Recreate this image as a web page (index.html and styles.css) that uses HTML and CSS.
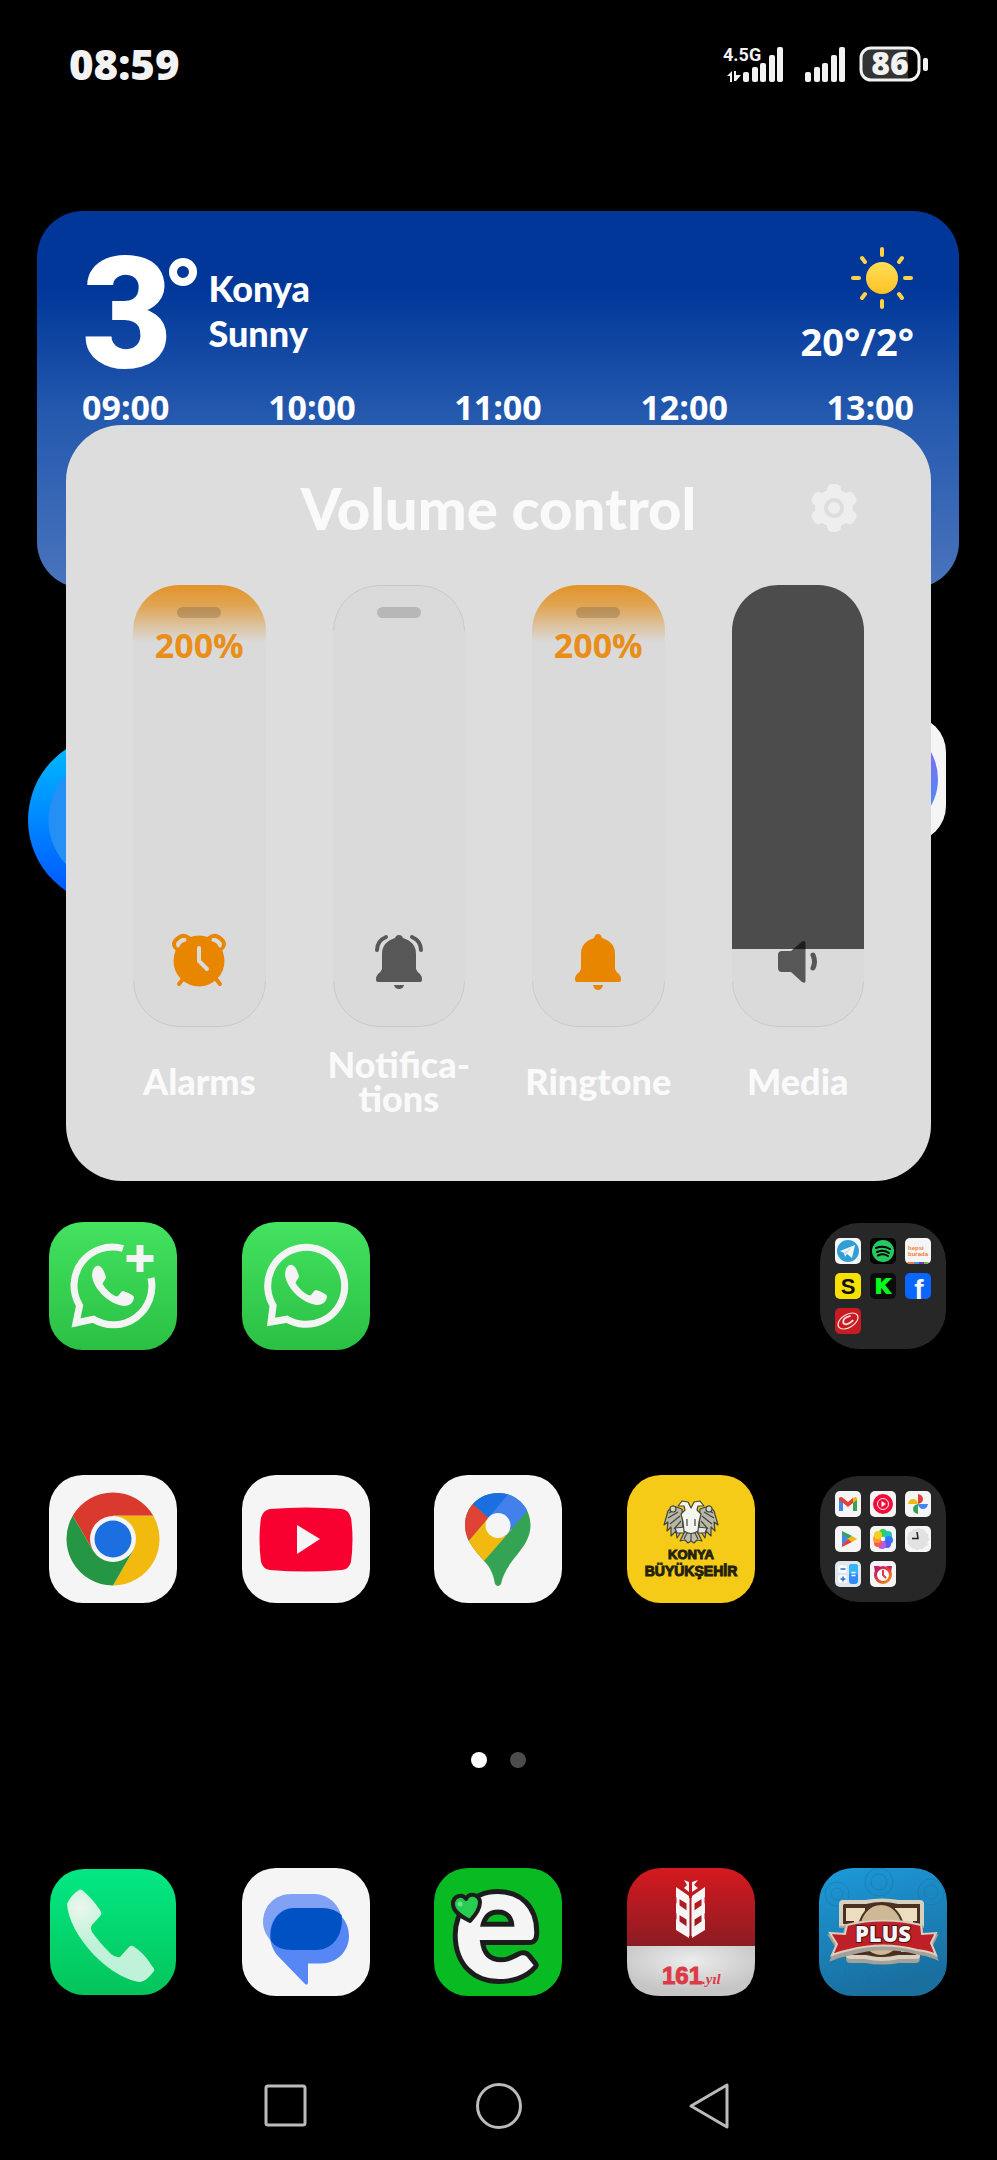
FILE: index.html
```html
<!DOCTYPE html>
<html lang="en">
<head>
    <meta charset="UTF-8">
    <meta name="viewport" content="width=device-width, initial-scale=1.0">
    <title>Volume control</title>
    <link rel="stylesheet" href="styles.css">
</head>
<body>
    <header class="status-bar">
        <time class="clock">08:59</time>
        <div class="status-icons">
            <svg width="62" height="36" viewBox="0 0 62 36" fill="#f2f2f2">
                <text x="0" y="15" class="network">4.5G</text>
                <path d="M4 30L9 25V36H7V30ZM11 25H13V29H18L13 35H11Z"/>
                <rect x="20" y="26" width="6" height="10" rx="2"/>
                <rect x="29" y="21" width="6" height="15" rx="2"/>
                <rect x="37" y="17" width="6" height="19" rx="2"/>
                <rect x="46" y="9" width="6" height="27" rx="2"/>
                <rect x="54" y="1" width="6" height="35" rx="2"/>
            </svg>
            <svg width="40" height="36" viewBox="0 0 40 36" fill="#f2f2f2">
                <rect x="0" y="26" width="6" height="10" rx="2"/>
                <rect x="9" y="21" width="6" height="15" rx="2"/>
                <rect x="17" y="17" width="6" height="19" rx="2"/>
                <rect x="26" y="9" width="6" height="27" rx="2"/>
                <rect x="34" y="1" width="6" height="35" rx="2"/>
            </svg>
            <svg class="battery" width="69" height="36" viewBox="0 0 69 36">
                <path d="M12 2H49V34H12Q2 34 2 24V12Q2 2 12 2Z" fill="#333"/>
                <rect x="2" y="2" width="58" height="32" rx="10" fill="none" stroke="#f2f2f2" stroke-width="3"/>
                <rect x="64" y="12" width="5" height="13" rx="2" fill="#f2f2f2"/>
                <text x="31" y="29" text-anchor="middle" class="charge">86</text>
            </svg>
        </div>
    </header>

    <section class="weather">
        <div class="summary">
            <div class="degrees">3<svg width="30" height="30" viewBox="0 0 30 30"><circle cx="15" cy="15" r="10" fill="none" stroke="#fff" stroke-width="8"/></svg></div>
            <div class="place">Konya<br>Sunny</div>
            <div class="forecast">
                <svg width="62" height="62" viewBox="0 0 62 62">
                    <defs>
                        <linearGradient id="sun" x1="0" y1="0" x2="0" y2="1">
                            <stop offset="0" stop-color="#ffdf58"/>
                            <stop offset="1" stop-color="#ffc124"/>
                        </linearGradient>
                    </defs>
                    <circle cx="30" cy="31" r="16" fill="url(#sun)"/>
                    <path d="M30 2V8M30 54V60M1 31H7M53 31H59M10 11L13 15M50 11L47 15M10 51L13 47M50 51L47 47" stroke="#ffd247" stroke-width="4" stroke-linecap="round"/>
                </svg>
                <span class="range">20°/2°</span>
            </div>
        </div>
        <div class="hours">
            <span>09:00</span>
            <span>10:00</span>
            <span>11:00</span>
            <span>12:00</span>
            <span>13:00</span>
        </div>
    </section>

    <main class="home">
        <div class="widgets">
            <div class="orb"></div>
            <svg class="app" viewBox="0 0 128 128">
                <defs>
                    <linearGradient id="ring" x1="0" y1="0" x2="0" y2="1">
                        <stop offset="0.2" stop-color="#7e6cf0"/>
                        <stop offset="0.8" stop-color="#4d8df8"/>
                    </linearGradient>
                </defs>
                <rect x="1" y="1" width="126" height="126" rx="36" fill="#f5f5f5"/>
                <circle cx="64" cy="64" r="55" fill="url(#ring)"/>
            </svg>
        </div>

        <div class="apps">
            <svg class="app" viewBox="0 0 128 128">
                <defs>
                    <linearGradient id="green" x1="0" y1="0" x2="0" y2="1">
                        <stop offset="0" stop-color="#43e25f"/>
                        <stop offset="1" stop-color="#2bc044"/>
                    </linearGradient>
                </defs>
                <rect width="128" height="128" rx="34" fill="url(#green)"/>
                <path d="M102 56A38.5 38.5 0 0 1 44.5 97.2L27 101L30.6 83.5A38.5 38.5 0 0 1 74 26.5" fill="none" stroke="#f4f4f4" stroke-width="7"/>
                <path d="M91 23V50M77.5 36.5H104.5" stroke="#f4f4f4" stroke-width="7"/>
                <path d="M50 44C46 43 43 48 43 54C45 68 60 82 75 84C81 84 85 80 85 75C85 73 75 69 74 69C72 69 70 74 68 74.5C62 73 56 66 53.5 62C54 60 57 57 57 55C56 52 54 45 50 44Z" fill="#f4f4f4"/>
            </svg>
            <svg class="app" viewBox="0 0 128 128">
                <rect width="128" height="128" rx="34" fill="url(#green)"/>
                <path d="M31.1 83.5A38.5 38.5 0 1 1 45 97.2L29 100Z" fill="none" stroke="#f4f4f4" stroke-width="7"/>
                <path d="M50 43C46 42 43 47 43 53C45 67 60 81 75 83C81 83 85 79 85 74C85 72 75 68 74 68C72 68 70 73 68 73.5C62 72 56 65 53.5 61C54 59 57 56 57 54C56 51 54 44 50 43Z" fill="#f4f4f4"/>
            </svg>
            <div class="folder folder-top">
                <svg class="mini" viewBox="0 0 26 26">
                    <rect width="26" height="26" rx="5" fill="#f5f5f5"/>
                    <circle cx="13" cy="13" r="11" fill="#2f9fd8"/>
                    <path d="M5 13L20 7L17 20L12 16L10 19L9 15Z" fill="#f5f5f5"/>
                    <path d="M9 15L17 9L11 16" fill="#b9dbee"/>
                </svg>
                <svg class="mini" viewBox="0 0 26 26">
                    <rect width="26" height="26" rx="5" fill="#000"/>
                    <circle cx="13" cy="13" r="11" fill="#26c95f"/>
                    <path d="M6 10Q13 7 20 11M7 14Q13 11 19 15M8 17.5Q13 15 18 18" fill="none" stroke="#000" stroke-width="2" stroke-linecap="round"/>
                </svg>
                <svg class="mini" viewBox="0 0 26 26">
                    <rect width="26" height="26" rx="5" fill="#f5f5f5"/>
                    <text x="3" y="12" class="shop">hepsi</text>
                    <text x="3" y="18" class="shop">burada</text>
                    <path d="M2 24H9V26H4Z" fill="#f47b35"/>
                    <path d="M9 24H14V26H9Z" fill="#3f9bd8"/>
                    <path d="M14 24H19V26H14Z" fill="#7c35c0"/>
                    <path d="M19 24H24L22 26H19Z" fill="#6fc040"/>
                </svg>
                <svg class="mini" viewBox="0 0 26 26">
                    <rect width="26" height="26" rx="5" fill="#f7e000"/>
                    <text x="13" y="21" text-anchor="middle" class="letter">S</text>
                </svg>
                <svg class="mini" viewBox="0 0 26 26">
                    <rect width="26" height="26" rx="5" fill="#0c0c0c"/>
                    <text x="13" y="20" text-anchor="middle" class="letter letter-k">K</text>
                </svg>
                <svg class="mini" viewBox="0 0 26 26">
                    <rect width="26" height="26" rx="5" fill="#0a66ff"/>
                    <text x="14" y="26" text-anchor="middle" class="letter letter-f">f</text>
                </svg>
                <svg class="mini" viewBox="0 0 26 26">
                    <rect width="26" height="26" rx="5" fill="#c91c22"/>
                    <g fill="none" stroke="#f7dede" transform="rotate(-32 13 13)">
                        <ellipse cx="13" cy="13" rx="11" ry="6.5" stroke-width="1.2"/>
                        <path d="M18 10Q10 7 8 12Q8 17 18 15" stroke-width="1.8"/>
                    </g>
                </svg>
            </div>

            <svg class="app" viewBox="0 0 128 128">
                <rect width="128" height="128" rx="34" fill="#f5f5f5"/>
                <path d="M23.7 40.75A46.5 46.5 0 0 1 104.3 40.75H64L43.9 75.6Z" fill="#d93a2d"/>
                <path d="M104.3 40.75A46.5 46.5 0 0 1 64 110.5L84.1 75.6L64 40.75Z" fill="#f2b90f"/>
                <path d="M64 110.5A46.5 46.5 0 0 1 23.7 40.75L43.9 75.6H84.1Z" fill="#259644"/>
                <circle cx="64" cy="64" r="23" fill="#f5f5f5"/>
                <circle cx="64" cy="64" r="18.5" fill="#1b6fe0"/>
            </svg>
            <svg class="app" viewBox="0 0 128 128">
                <rect width="128" height="128" rx="34" fill="#f5f5f5"/>
                <path d="M28 34Q64 31 100 34Q107 35 109 43Q112 64 109 87Q107 94 100 95Q64 98 28 95Q21 94 19 87Q16 64 19 43Q21 35 28 34Z" fill="#f8002f"/>
                <path d="M55 50L78 64L55 79Z" fill="#f5f5f5"/>
            </svg>
            <svg class="app" viewBox="0 0 128 128">
                <defs>
                    <clipPath id="pin">
                        <path d="M64 18C82.5 18 96.5 32 96.5 50C96.5 74 72 84 67 109Q64 113 61 109C59 97 55 91 50 86C42 76 31 66 31 50C31 32 45.5 18 64 18Z"/>
                    </clipPath>
                </defs>
                <rect width="128" height="128" rx="34" fill="#f5f5f5"/>
                <g clip-path="url(#pin)">
                    <rect x="20" y="10" width="90" height="110" fill="#34a353"/>
                    <path d="M10 95L50 86L78 54L54 43Z" fill="#f2b90f"/>
                    <path d="M20 83L54.3 42.7L39 29L20 12Z" fill="#e04335"/>
                    <path d="M54.3 42.7L39 29L20 10H80L60 50Z" fill="#1b6fe0"/>
                    <path d="M54.3 42.7L82 10H110V17L71 61.5Z" fill="#4280ec"/>
                </g>
                <circle cx="64" cy="50.5" r="12.5" fill="#f5f5f5"/>
            </svg>
            <svg class="app" viewBox="0 0 128 128">
                <rect width="128" height="128" rx="34" fill="#f5cb18"/>
                <g stroke="#45453a" stroke-width="1.2" stroke-linejoin="round">
                    <path d="M55 34L46 31L41 36L37 50L41 47L40 56L44 52L44 61L49 56L50 63L56 54Z" fill="#b8b8a8"/>
                    <path d="M73 34L82 31L87 36L91 50L87 47L88 56L84 52L84 61L79 56L78 63L72 54Z" fill="#b8b8a8"/>
                    <path d="M60 52L68 52L75 66L70 65L67 68L64 66L61 68L58 65L53 66Z" fill="#bdbdb0"/>
                    <path d="M48 53L58 52L57 58H50ZM70 52L80 53L78 58H71Z" fill="#e5e5e0"/>
                    <path d="M64 33L61 27L55 26L51 31L57 31L58 35L54 39L56 47L57 56Q64 61 71 56L72 47L74 39L70 35L71 31L77 31L73 26L67 27Z" fill="#f5f5f0"/>
                    <path d="M42 38L49 34M41 43L51 37M43 49L53 41M47 54L54 46M86 38L79 34M87 43L77 37M85 49L75 41M81 54L74 46M64 58V66M60 58L57 64M68 58L71 64M60 44V51M68 44V51" fill="none"/>
                    <circle cx="46" cy="34" r="3" fill="#d5d5ca"/>
                    <circle cx="82" cy="34" r="3" fill="#d5d5ca"/>
                </g>
                <text x="64" y="84" text-anchor="middle" class="city">KONYA</text>
                <text x="64" y="101" text-anchor="middle" class="city city-large">BÜYÜKŞEHİR</text>
            </svg>
            <div class="folder">
                <svg class="mini" viewBox="0 0 26 26">
                    <rect width="26" height="26" rx="5" fill="#f5f5f5"/>
                    <path d="M4 8V20H8V10Z" fill="#4285f4"/>
                    <path d="M18 10V20H22V8Z" fill="#34a353"/>
                    <path d="M4 7Q6 5 8 7L13 11L18 7V12L13 16L8 12L4 9Z" fill="#e04335"/>
                    <path d="M18 7Q22 4 22 9L18 12Z" fill="#f2b90f"/>
                </svg>
                <svg class="mini" viewBox="0 0 26 26">
                    <rect width="26" height="26" rx="5" fill="#f5f5f5"/>
                    <circle cx="13" cy="13" r="10" fill="#f20d3a"/>
                    <circle cx="13" cy="13" r="5.5" fill="none" stroke="#f5f5f5"/>
                    <path d="M11.5 10L16 13L11.5 16Z" fill="#f5f5f5"/>
                </svg>
                <svg class="mini" viewBox="0 0 26 26">
                    <rect width="26" height="26" rx="5" fill="#f5f5f5"/>
                    <path d="M13 13V3Q18 4 18 8Q18 12 13 13Z" fill="#e04335"/>
                    <path d="M13 13H23Q22 18 18 18Q14 18 13 13Z" fill="#4285f4"/>
                    <path d="M13 13V23Q8 22 8 18Q8 14 13 13Z" fill="#34a353"/>
                    <path d="M13 13H3Q4 8 8 8Q12 8 13 13Z" fill="#f2b90f"/>
                </svg>
                <svg class="mini" viewBox="0 0 26 26">
                    <rect width="26" height="26" rx="5" fill="#f5f5f5"/>
                    <path d="M7 6V20L13 13Z" fill="#4285f4"/>
                    <path d="M7 5L17 10L13 13L7 7Z" fill="#34a353"/>
                    <path d="M17 10L22 13L17 16L13 13Z" fill="#f2b90f"/>
                    <path d="M7 21L17 16L13 13L7 19Z" fill="#e04335"/>
                </svg>
                <svg class="mini" viewBox="0 0 26 26">
                    <rect width="26" height="26" rx="5" fill="#f5f5f5"/>
                    <circle cx="13" cy="7" r="4" fill="#35d04f"/>
                    <circle cx="18" cy="9" r="4" fill="#22c5b5"/>
                    <circle cx="19" cy="14" r="4" fill="#2a7bf5"/>
                    <circle cx="17" cy="18" r="4" fill="#5a5af0"/>
                    <circle cx="12" cy="19" r="4" fill="#b05cf0"/>
                    <circle cx="8" cy="17" r="4" fill="#ff5a4a"/>
                    <circle cx="7" cy="13" r="4" fill="#ff9a2e"/>
                    <circle cx="8" cy="9" r="4" fill="#f5d020"/>
                    <circle cx="13" cy="13" r="2" fill="#fff"/>
                </svg>
                <svg class="mini" viewBox="0 0 26 26">
                    <rect width="26" height="26" rx="5" fill="#f5f5f5"/>
                    <circle cx="13" cy="13" r="10.5" fill="#e2e2e2" stroke="#ccc" stroke-dasharray="1 4.5"/>
                    <path d="M7 12.5H13L12 6" fill="none" stroke="#222" stroke-width="1.5"/>
                </svg>
                <svg class="mini" viewBox="0 0 26 26">
                    <rect width="26" height="26" rx="5" fill="#dfe6ee"/>
                    <rect x="3" y="4" width="9" height="8" rx="2" fill="#f7f9fc"/>
                    <rect x="3" y="14" width="9" height="8" rx="2" fill="#f7f9fc"/>
                    <rect x="14" y="3" width="9" height="20" rx="3" fill="#2f8cff"/>
                    <path d="M14 13V6Q14 3 17 3H20Q23 3 23 6V13Z" fill="#35b5f5"/>
                    <path d="M5.5 8H10.5M5.5 18H10.5M8 15.5V20.5" stroke="#2573c8" stroke-width="1.5"/>
                    <path d="M16.5 11.5H20.5M16.5 14.5H20.5" stroke="#fff" stroke-width="1.5"/>
                </svg>
                <svg class="mini" viewBox="0 0 26 26">
                    <defs>
                        <linearGradient id="alarm" x1="0" y1="0" x2="1" y2="1">
                            <stop offset="0" stop-color="#b5127a"/>
                            <stop offset="0.5" stop-color="#e8402e"/>
                            <stop offset="1" stop-color="#f59a20"/>
                        </linearGradient>
                    </defs>
                    <rect width="26" height="26" rx="5" fill="#f5f5f5"/>
                    <path d="M4 5H10L5 11ZM22 5H16L21 11Z" fill="#c02070"/>
                    <circle cx="13" cy="14" r="7.5" fill="#fff" stroke="url(#alarm)" stroke-width="3"/>
                    <path d="M13 9V14L16 17" fill="none" stroke="#d93a50" stroke-width="2"/>
                </svg>
            </div>
        </div>
    </main>

    <div class="pages">
        <span class="page page-active"></span>
        <span class="page"></span>
    </div>

    <div class="dock">
        <svg class="app" viewBox="0 0 128 128">
            <defs>
                <linearGradient id="call" x1="0" y1="0" x2="0" y2="1">
                    <stop offset="0" stop-color="#03e884"/>
                    <stop offset="1" stop-color="#04c45a"/>
                </linearGradient>
                <radialGradient id="handset" cx="0.15" cy="0.2" r="0.4">
                    <stop offset="0" stop-color="#eef6ef"/>
                    <stop offset="0.4" stop-color="#d5f5e2"/>
                    <stop offset="1" stop-color="#bff2d8"/>
                </radialGradient>
            </defs>
            <rect x="1" y="1" width="126" height="126" rx="34" fill="url(#call)"/>
            <path d="M30 22Q22 27 18 36Q20 60 45 87Q68 110 90 114Q96 115 105 103Q106 101 103 98Q95 85 84 78Q82 77 80 79L71 89Q67 90 62 86Q50 74 43 64Q41 60 43 57L52 47Q53 45 51 42Q43 30 33 22Q31 21 30 22Z" fill="url(#handset)"/>
        </svg>
        <svg class="app" viewBox="0 0 128 128">
            <rect width="128" height="128" rx="34" fill="#f5f5f5"/>
            <path d="M49 26H73C88 26 100 40 100 54C100 70 88 82 74 82H40L29 73C24 67 21 61 21 54C21 38 33 26 49 26Z" fill="#81a1f4"/>
            <path d="M51 40H79C95 40 107 52 107 68C107 83 95 95.5 79 95.5H66V114Q66 118 63 116L35 87C30 80 28 74 28 67C28 52 38 40 51 40Z" fill="#5787f5"/>
            <path d="M52 40H80Q92 40 99.5 47C102 65 92 82 74 82H50Q35 82 29 73C26 55 37 40 52 40Z" fill="#0052c4"/>
        </svg>
        <svg class="app" viewBox="0 0 128 128">
            <rect width="128" height="128" rx="34" fill="#08bb22"/>
            <text x="62" y="110" text-anchor="middle" class="logo-e">e</text>
            <path d="M36 53C28 49 19 44 19 36C19 28 28 25 32 31C35 24 45 26 46 34C46 42 41 47 36 53Z" fill="#27cc50" stroke="#1c1c1c" stroke-width="4" stroke-linejoin="round"/>
            <circle cx="26" cy="36" r="2.5" fill="#72e08c"/>
        </svg>
        <svg class="app" viewBox="0 0 128 128">
            <defs>
                <linearGradient id="bank" x1="0" y1="0" x2="0" y2="1">
                    <stop offset="0" stop-color="#d5191f"/>
                    <stop offset="0.6" stop-color="#8d1c22"/>
                </linearGradient>
                <radialGradient id="silver" cx="0.5" cy="0.3" r="0.6">
                    <stop offset="0" stop-color="#ececec"/>
                    <stop offset="1" stop-color="#c6c6c6"/>
                </radialGradient>
            </defs>
            <rect width="128" height="128" rx="34" fill="url(#bank)"/>
            <path d="M0 78H128V94Q128 128 94 128H34Q0 128 0 94Z" fill="url(#silver)"/>
            <path d="M49 19L62 28V37L49 29ZM78 19L65 28V37L78 29ZM49 35L62 44V53L49 45ZM78 35L65 44V53L78 45ZM49 51L62 60V70L49 62ZM78 51L65 60V70L78 62ZM57 12L62 14V24L57 20L60 17ZM71 12L65 14V24L71 20L67 17Z" fill="#f5f5f5"/>
            <path d="M51 29V50M51 44V62M76 29V46M76 44V62M61 30V68M66 30V68" stroke="#f5f5f5" stroke-width="3"/>
            <text x="35" y="116" class="years">161</text>
            <text x="75" y="116" class="years-suffix">.yıl</text>
        </svg>
        <svg class="app" viewBox="0 0 128 128">
            <defs>
                <linearGradient id="felt" x1="0" y1="0" x2="0.3" y2="1">
                    <stop offset="0" stop-color="#1c9ada"/>
                    <stop offset="1" stop-color="#1a6f9f"/>
                </linearGradient>
                <clipPath id="tile">
                    <rect width="128" height="128" rx="34"/>
                </clipPath>
            </defs>
            <rect width="128" height="128" rx="34" fill="url(#felt)"/>
            <g fill="none" stroke="#1575a8" opacity="0.5" clip-path="url(#tile)">
                <circle cx="60" cy="14" r="14"/><circle cx="60" cy="14" r="8"/>
                <circle cx="112" cy="24" r="13"/><circle cx="112" cy="24" r="7"/>
                <circle cx="18" cy="26" r="12"/><circle cx="18" cy="26" r="6"/>
                <circle cx="56" cy="112" r="13"/><circle cx="56" cy="112" r="7"/>
                <circle cx="108" cy="104" r="13"/><circle cx="108" cy="104" r="7"/>
                <circle cx="16" cy="104" r="10"/>
            </g>
            <path d="M24 35H102Q105 35 105 38V60H101V90Q101 95 97 95H80Q63 98 46 95H31Q27 95 27 90V60H20V39Q20 35 24 35Z" fill="#a5a199"/>
            <path d="M24 32H46Q63 29 80 32H101Q105 32 105 36V58H101V87Q101 91 97 91H80Q63 95 46 91H31Q27 91 27 87V58H20V36Q20 32 24 32Z" fill="#d9cfbe"/>
            <path d="M25 36H47Q63 32 79 36H101V56H97V87H79Q63 91 47 87H31V56H24V37Z" fill="#4a3020"/>
            <path d="M27 40H46V84H35V53H27ZM76 40H98V53H94V84H82V53H76Z" fill="#ecdcc0"/>
            <ellipse cx="62" cy="62" rx="22" ry="26" fill="#cdb996" stroke="#4a3020" stroke-width="2"/>
            <path d="M11 68L25 69L27 58Q64 48 102 58L103 69L117 68L112 78L117 90Q108 86 98 85Q64 76 30 86Q20 88 13 91L18 79Z" fill="#a5a199" stroke="#a5a199" stroke-width="3"/>
            <path d="M11 65L26 66L28 57Q64 48 102 57L103 66L117 65L112 75L117 87Q109 83 98 82Q64 73 30 82Q20 84 13 87L18 76Z" fill="#bf1f26" stroke="#d9cfbe" stroke-width="2"/>
            <text x="64" y="74" text-anchor="middle" class="plus">PLUS</text>
        </svg>
    </div>

    <nav class="nav-bar">
        <button class="nav-btn" aria-label="Recent apps">
            <svg width="46" height="46" viewBox="0 0 46 46"><rect x="2" y="4" width="39" height="39" rx="2"/></svg>
        </button>
        <button class="nav-btn" aria-label="Home">
            <svg width="46" height="46" viewBox="0 0 46 46"><circle cx="23" cy="24" r="21.5"/></svg>
        </button>
        <button class="nav-btn" aria-label="Back">
            <svg width="46" height="46" viewBox="0 0 46 46"><path d="M3 24L39 3V45Z"/></svg>
        </button>
    </nav>

    <section class="volume-panel" role="dialog" aria-labelledby="volume-title">
        <div class="panel-header">
            <h1 id="volume-title">Volume control</h1>
            <button class="settings-btn" aria-label="Settings">
                <svg width="60" height="60" viewBox="0 0 60 60">
                    <g fill="#eee">
                        <circle cx="30" cy="30" r="19"/>
                        <rect x="23" y="6" width="14" height="48" rx="5"/>
                        <rect x="23" y="6" width="14" height="48" rx="5" transform="rotate(60 30 30)"/>
                        <rect x="23" y="6" width="14" height="48" rx="5" transform="rotate(120 30 30)"/>
                    </g>
                    <circle cx="30" cy="30" r="8" fill="none" stroke="#ddd" stroke-width="4"/>
                </svg>
            </button>
        </div>

        <div class="sliders">
            <div class="slider">
                <div class="track">
                    <input type="range" id="alarms" class="boosted" min="0" max="200" value="200">
                    <span class="grip"></span>
                    <output class="value" for="alarms">200%</output>
                    <svg class="slider-icon" viewBox="0 0 60 60">
                        <g fill="none" stroke="#e98600" stroke-width="4" stroke-linecap="round">
                            <path d="M8 18Q2 13 8 8Q14 2 20 7M52 18Q58 13 52 8Q46 2 40 7M14 48L10 53M47 48L51 53"/>
                        </g>
                        <circle cx="30" cy="30" r="25.5" fill="#e98600"/>
                        <path d="M9 15Q11 10 16 9M51 15Q49 10 44 9" fill="none" stroke="#dadada" stroke-width="3" stroke-linecap="round"/>
                        <path d="M30 17V30L38 38" fill="none" stroke="#dadada" stroke-width="4" stroke-linecap="round"/>
                    </svg>
                </div>
                <label for="alarms">Alarms</label>
            </div>
            <div class="slider">
                <div class="track track-empty">
                    <input type="range" id="notifications" min="0" max="200" value="0">
                    <span class="grip"></span>
                    <svg class="slider-icon" viewBox="0 0 60 60" fill="#575757">
                        <path d="M30 4Q33 4 34 7Q47 11 47 23V38Q48 41 51 43Q53 45 53 49Q53 51 51 51H9Q7 51 7 49Q7 45 9 43Q12 41 13 38V23Q13 11 26 7Q27 4 30 4Z"/>
                        <path d="M25 54H35Q34 58 30 58Q26 58 25 54Z"/>
                        <path d="M17 6Q8 10 8 19M43 6Q52 10 52 19" fill="none" stroke="#575757" stroke-width="4" stroke-linecap="round"/>
                    </svg>
                </div>
                <label for="notifications">Notifica-<br>tions</label>
            </div>
            <div class="slider">
                <div class="track">
                    <input type="range" id="ringtone" class="boosted" min="0" max="200" value="200">
                    <span class="grip"></span>
                    <output class="value" for="ringtone">200%</output>
                    <svg class="slider-icon" viewBox="0 0 60 60" fill="#e98600">
                        <path d="M30 3Q33 3 34 7Q47 11 47 23V38Q48 41 51 43Q53 45 53 49Q53 51 51 51H9Q7 51 7 49Q7 45 9 43Q12 41 13 38V23Q13 11 26 7Q27 3 30 3Z"/>
                        <path d="M25 54H35Q34 59 30 59Q26 59 25 54Z"/>
                    </svg>
                </div>
                <label for="ringtone">Ringtone</label>
            </div>
            <div class="slider">
                <div class="track">
                    <input type="range" id="media" class="media" min="0" max="100" value="18">
                    <svg class="slider-icon" viewBox="0 0 60 60" fill="#000" fill-opacity="0.6">
                        <path d="M14 20H23L34 10.5Q37.5 9 37.5 12V50Q37.5 53 34 51L23 41H14Q10 41 10 37V24Q10 20 14 20Z"/>
                        <path d="M45 24Q48 31 45 37" fill="none" stroke="#000" stroke-opacity="0.6" stroke-width="5" stroke-linecap="round"/>
                    </svg>
                </div>
                <label for="media">Media</label>
            </div>
        </div>
    </section>
</body>
</html>
```

FILE: styles.css
```css
* {
    margin: 0;
    padding: 0;
    box-sizing: border-box;
}

body {
    position: relative;
    min-height: 100vh;
    background: #000;
    color: white;
    font-family: 'Open Sans', 'Noto Sans', sans-serif;
    overflow-x: hidden;
}

svg {
    display: block;
    flex-shrink: 0;
    overflow: visible;
}

button {
    background: none;
    border: none;
    cursor: pointer;
}

/* status bar */
.status-bar {
    display: flex;
    align-items: center;
    justify-content: space-between;
    height: 128px;
    padding: 0 69px;
}

.clock {
    font-size: 42px;
    font-weight: 800;
    line-height: 48px;
    color: #f2f2f2;
}

.status-icons {
    display: flex;
    gap: 20px;
}

.battery {
    margin-left: -6px;
}

.network {
    font-family: 'Roboto', sans-serif;
    font-size: 18px;
    font-weight: 700;
}

.charge {
    font-size: 32px;
    font-weight: 800;
    fill: #f2f2f2;
}

/* weather */
.weather {
    height: 377px;
    margin: 83px 38px 0 37px;
    padding: 36px 45px;
    border-radius: 46px;
    background: linear-gradient(#003799 20%, #2459ae 54%, #4a74bd);
}

.summary {
    display: flex;
    height: 128px;
    margin-bottom: 9px;
}

.degrees {
    display: flex;
    font-family: 'Roboto', sans-serif;
    font-size: 156px;
    font-weight: 900;
    line-height: 134px;
}

.degrees svg {
    margin: 10px 10px 0 -4px;
}

.place {
    align-self: center;
    font-family: 'Lato', sans-serif;
    font-size: 36px;
    font-weight: 900;
    line-height: 45px;
}

.forecast {
    display: flex;
    flex-direction: column;
    align-items: flex-end;
    gap: 9px;
    margin-left: auto;
}

.range {
    font-size: 38px;
    font-weight: 700;
    line-height: 46px;
}

.hours {
    display: flex;
    justify-content: space-between;
    font-size: 34px;
    font-weight: 700;
    line-height: 46px;
}

/* home screen */
.home {
    padding: 127px 50px 0 49px;
}

.widgets {
    display: flex;
    justify-content: space-between;
    height: 382px;
    margin-bottom: 125px;
}

.orb {
    width: 170px;
    height: 170px;
    margin: 20px 0 0 -21px;
    border-radius: 50%;
    background: radial-gradient(circle, #2490f5 64px, transparent 65px), linear-gradient(#00bfff, #0050ff);
}

.apps {
    display: grid;
    grid-template-columns: repeat(5, 128px);
    justify-content: space-between;
    row-gap: 125px;
}

.app {
    width: 128px;
    height: 128px;
}

.folder {
    display: grid;
    grid-template-columns: repeat(3, 26px);
    grid-auto-rows: 26px;
    gap: 9px;
    padding: 15px;
    height: 128px;
    border: 1px solid #000;
    border-radius: 40px;
    background: #272727;
}

.folder-top {
    grid-column: 5;
}

.mini {
    width: 26px;
    height: 26px;
}

.shop {
    font-family: 'Liberation Sans', sans-serif;
    font-size: 6px;
    font-weight: 700;
    fill: #f47b35;
}

.letter {
    font-family: 'Liberation Sans', sans-serif;
    font-size: 22px;
    font-weight: 700;
    fill: #0c0c0c;
}

.letter-k {
    font-size: 20px;
    fill: #00ff1a;
    stroke: #00ff1a;
    stroke-width: 2px;
}

.letter-f {
    font-size: 28px;
    fill: #f5f5f5;
}

.city {
    font-family: 'Liberation Sans', sans-serif;
    font-size: 13px;
    font-weight: 700;
    fill: #24220f;
    stroke: #24220f;
}

.city-large {
    font-size: 14px;
}

.pages {
    display: flex;
    justify-content: center;
    gap: 23px;
    margin: 149px 0 100px;
}

.page {
    width: 16px;
    height: 16px;
    border-radius: 50%;
    background: #4c4c4c;
}

.page-active {
    background: #fff;
}

.dock {
    display: flex;
    justify-content: space-between;
    padding: 0 50px 0 49px;
}

.logo-e {
    font-family: 'Lato', sans-serif;
    font-size: 160px;
    font-weight: 900;
    fill: #f5f5f5;
    stroke: #1c1c1c;
    stroke-width: 10px;
    stroke-linejoin: round;
    paint-order: stroke;
}

.years {
    font-family: 'Liberation Sans', sans-serif;
    font-size: 24px;
    font-weight: 700;
    fill: #dc3a46;
    stroke: #dc3a46;
}

.years-suffix {
    font-family: 'Liberation Serif', serif;
    font-size: 15px;
    font-style: italic;
    font-weight: 700;
    fill: #dc3a46;
}

.plus {
    font-size: 22px;
    font-weight: 800;
    fill: #f5f5f5;
    stroke: #4a1010;
    stroke-width: 2px;
    paint-order: stroke;
}

/* navigation bar */
.nav-bar {
    display: flex;
    justify-content: center;
    gap: 166px;
    padding: 86px 0 32px;
}

.nav-btn svg {
    fill: none;
    stroke: #bbb;
    stroke-width: 3;
    stroke-linejoin: round;
}

/* volume panel */
.volume-panel {
    position: absolute;
    top: 425px;
    left: 66px;
    right: 66px;
    padding: 48px 67px;
    border-radius: 56px;
    background: #ddd;
    color: #fafafa;
    font-family: 'Lato', sans-serif;
}

.panel-header {
    display: grid;
    grid-template-columns: 1fr auto 1fr;
    align-items: center;
    margin-bottom: 42px;
}

.panel-header h1 {
    grid-column: 2;
    font-size: 58px;
    font-weight: 900;
    line-height: 70px;
}

.settings-btn {
    justify-self: end;
}

.sliders {
    display: grid;
    grid-template-columns: repeat(4, minmax(0, 1fr));
    gap: 67px;
    margin-bottom: 18px;
}

.slider {
    display: flex;
    flex-direction: column;
    align-items: center;
    gap: 20px;
}

.track {
    position: relative;
    width: 100%;
    height: 442px;
}

/* thin line round the corners of the track */
.track::after {
    content: "";
    position: absolute;
    inset: 0;
    border: 1px solid #c8c8c8;
    border-radius: 46px;
    mask-image: linear-gradient(transparent 396px, #000 396px);
    pointer-events: none;
}

.track-empty::after {
    mask-image: linear-gradient(#000 46px, transparent 46px, transparent 396px, #000 396px);
}

.track input {
    appearance: none;
    display: block;
    width: 100%;
    height: 100%;
    writing-mode: vertical-lr;
    direction: rtl;
    border-radius: 46px;
    background: #dadada;
    cursor: pointer;
}

.track input::-webkit-slider-thumb {
    appearance: none;
    width: 100%;
    height: 1px;
    background: transparent;
}

.track .boosted {
    background: linear-gradient(#e3932a, #e0a452 20px, #dadada 57px);
}

.track .media {
    background: linear-gradient(#4c4c4c 364px, #dadada 364px);
}

.grip {
    position: absolute;
    top: 22px;
    left: calc(50% - 22px);
    width: 44px;
    height: 11px;
    border-radius: 6px;
    background: rgba(0, 0, 0, 0.16);
    pointer-events: none;
}

.value {
    position: absolute;
    top: 40px;
    left: 0;
    right: 0;
    font-family: 'Open Sans', sans-serif;
    font-size: 34px;
    font-weight: 700;
    line-height: 40px;
    text-align: center;
    color: #e88e19;
    pointer-events: none;
}

.slider-icon {
    position: absolute;
    bottom: 36px;
    left: calc(50% - 30px);
    width: 60px;
    height: 60px;
    pointer-events: none;
}

.slider label {
    display: flex;
    align-items: center;
    height: 68px;
    font-size: 36px;
    font-weight: 900;
    line-height: 34px;
    text-align: center;
    white-space: nowrap;
}
```
